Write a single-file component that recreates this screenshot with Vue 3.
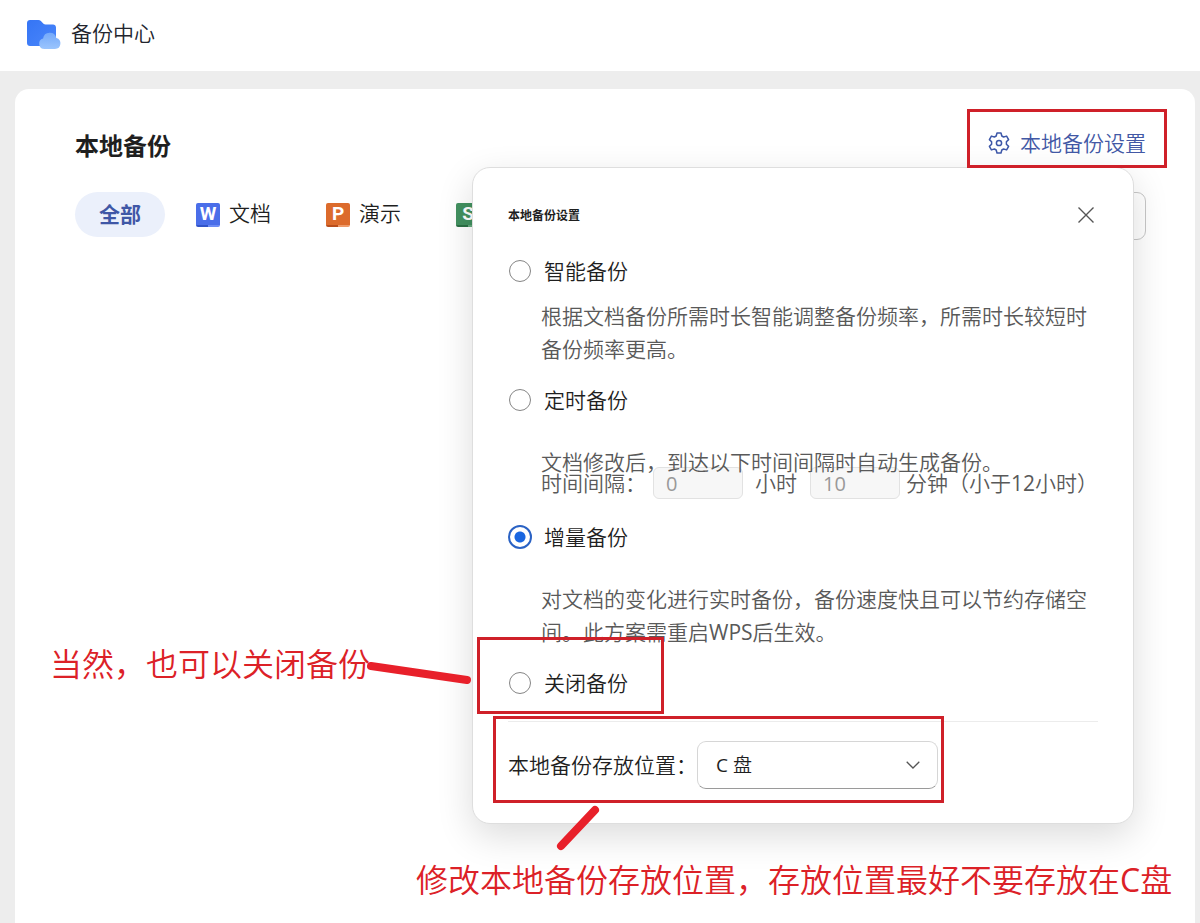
<template>
  <div class="page">
    <header class="topbar">
      <svg class="logo" viewBox="0 0 34 30" aria-hidden="true">
        <defs>
          <linearGradient id="folder" x1="0" y1="0" x2="1" y2="1">
            <stop offset="0" stop-color="#3575f5" />
            <stop offset="1" stop-color="#4a86fa" />
          </linearGradient>
          <linearGradient id="cloud" x1="0" y1="0" x2="0" y2="1">
            <stop offset="0" stop-color="#74a9fa" />
            <stop offset="1" stop-color="#9bc5fd" />
          </linearGradient>
        </defs>
        <path
          d="M3 0h8.500c1 0 1.700.4 2.400 1.100l2.600 2.600c.6.6 1.200.8 2 .8H26c1.700 0 3 1.300 3 3V23c0 1.700-1.300 3-3 3H3c-1.700 0-3-1.300-3-3V3c0-1.700 1.300-3 3-3z"
          fill="url(#folder)"
        />
        <path
          d="M17.500 29a5.300 5.300 0 0 1-1.400-10.400 6.700 6.700 0 0 1 13.200-.6A5.600 5.600 0 0 1 28 29z"
          fill="url(#cloud)"
        />
      </svg>
      <span class="topbar-name">备份中心</span>
    </header>

    <main class="card">
      <div class="card-head">
        <h1 class="card-title">本地备份</h1>
        <button type="button" class="settings-btn">
          <svg width="24" height="24" viewBox="0 0 24 24" fill="none" stroke="#3d57a8" stroke-width="1.500" stroke-linejoin="round" aria-hidden="true">
            <path d="M10 2h4l.8 3 1.800 1 3-.9 2 3.500-2.200 2.200v2.400l2.200 2.200-2 3.500-3-.9-1.800 1-.8 3h-4l-.8-3-1.800-1-3 .9-2-3.500 2.200-2.200v-2.400L2.400 8.600l2-3.500 3 .9 1.800-1z" />
            <circle cx="12" cy="12" r="2.600" />
          </svg>
          <span>本地备份设置</span>
          <i class="mark mark-settings"></i>
        </button>
      </div>

      <div class="toolbar">
        <nav class="tabs">
          <button
            v-for="tab in tabs"
            :key="tab.kind"
            type="button"
            class="tab"
            :class="{ 'is-active': tab.kind === activeTab }"
            @click="activeTab = tab.kind"
          >
            <span v-if="tab.letter" class="file-icon" :class="tab.kind">{{ tab.letter }}</span>
            <span v-if="tab.name">{{ tab.name }}</span>
          </button>
        </nav>
        <input class="search" type="text" aria-label="搜索" />
      </div>

      <section class="dialog" role="dialog" aria-labelledby="dialog-title">
        <div class="dialog-head">
          <h2 id="dialog-title" class="dialog-title">本地备份设置</h2>
          <button type="button" class="close-btn" aria-label="关闭">
            <svg width="16" height="16" viewBox="0 0 16 16" stroke="#555" stroke-width="1.400" aria-hidden="true">
              <path d="M.5.5l15 15M15.500.5l-15 15" />
            </svg>
          </button>
        </div>

        <div class="option">
          <label class="option-label">
            <input v-model="mode" type="radio" name="mode" value="smart" />
            <span>智能备份</span>
          </label>
          <p class="desc desc-near">根据文档备份所需时长智能调整备份频率，所需时长较短时备份频率更高。</p>
        </div>

        <div class="option">
          <label class="option-label">
            <input v-model="mode" type="radio" name="mode" value="timed" />
            <span>定时备份</span>
          </label>
          <p class="desc">文档修改后，到达以下时间间隔时自动生成备份。</p>
          <div class="interval">
            <label for="hours">时间间隔：</label>
            <input id="hours" v-model="hours" class="number" type="text" disabled />
            <label for="hours" class="unit">小时</label>
            <input id="minutes" v-model="minutes" class="number" type="text" disabled />
            <label for="minutes">分钟（小于12小时）</label>
          </div>
        </div>

        <div class="option">
          <label class="option-label">
            <input v-model="mode" type="radio" name="mode" value="increment" />
            <span>增量备份</span>
          </label>
          <p class="desc">对文档的变化进行实时备份，备份速度快且可以节约存储空间。此方案需重启WPS后生效。</p>
        </div>

        <div class="option">
          <label class="option-label">
            <input v-model="mode" type="radio" name="mode" value="off" />
            <span>关闭备份</span>
          </label>
          <i class="mark mark-off"></i>
        </div>

        <div class="location">
          <label for="disk">本地备份存放位置：</label>
          <div class="select-wrap">
            <select id="disk" v-model="disk">
              <option value="C">C 盘</option>
            </select>
            <svg class="chevron" width="14" height="8" viewBox="0 0 14 8" fill="none" stroke="#555" stroke-width="1.300" aria-hidden="true">
              <path d="M.7.7L7 7l6.300-6.300" />
            </svg>
          </div>
          <i class="mark mark-location"></i>
        </div>

        <p class="note note-off">当然，也可以关闭备份</p>
        <svg class="stroke stroke-off" width="106" height="24" viewBox="0 0 106 24" aria-hidden="true">
          <path d="M5 5L101 19" />
        </svg>
        <p class="note note-location">修改本地备份存放位置，存放位置最好不要存放在C盘</p>
        <svg class="stroke stroke-location" width="44" height="46" viewBox="0 0 44 46" aria-hidden="true">
          <path d="M39 5L5 41" />
        </svg>
      </section>
    </main>
  </div>
</template>

<script setup>
import { ref } from 'vue'

const tabs = [
  { kind: 'all', name: '全部' },
  { kind: 'word', name: '文档', letter: 'W' },
  { kind: 'slides', name: '演示', letter: 'P' },
  { kind: 'sheet', letter: 'S' },
]

const activeTab = ref('all')
const mode = ref('increment')
const hours = ref('0')
const minutes = ref('10')
const disk = ref('C')
</script>

<style>
body {
  margin: 0;
  background: #ededed;
}
</style>

<style scoped>
.page {
  min-height: 100vh;
  display: flex;
  flex-direction: column;
  font-family: "Open Sans", "Noto Sans CJK SC DemiLight", "Noto Sans CJK SC", sans-serif;
  font-size: 21px;
  line-height: 30px;
  color: #1f1f1f;
  overflow: hidden;
}

.page * { box-sizing: border-box; }

button, input, select {
  font: inherit;
  color: inherit;
  margin: 0;
}

button {
  padding: 0;
  border: 0;
  background: none;
  cursor: pointer;
}

h1, h2, p { margin: 0; }

.topbar {
  height: 71px;
  padding: 0 27px 2px;
  display: flex;
  align-items: center;
  gap: 10px;
  background: #fff;
}

.logo {
  width: 34px;
  height: 30px;
}

.topbar-name {
  padding-bottom: 3px;
  color: #22252e;
}

.card {
  position: relative;
  flex: 1;
  margin: 18px 5px 0 15px;
  padding: 34px 49px 0 60px;
  background: #fff;
  border-radius: 14px 14px 0 0;
}

.card-head {
  height: 44px;
  display: flex;
  align-items: center;
  justify-content: space-between;
}

.card-title {
  padding-bottom: 1px;
  font-family: "Noto Sans CJK SC", sans-serif;
  font-size: 24px;
  font-weight: 700;
}

.settings-btn {
  position: relative;
  z-index: 2;
  height: 32px;
  padding-bottom: 4px;
  display: flex;
  align-items: center;
  gap: 9px;
  color: #4258a5;
}

.toolbar {
  margin-top: 25px;
  display: flex;
  justify-content: space-between;
}

.tabs {
  display: flex;
  gap: 7px;
}

.tab {
  height: 45px;
  padding: 0 24px 3px;
  display: flex;
  align-items: center;
  gap: 9px;
  border-radius: 23px;
}

.tab.is-active {
  background: #ebf0fb;
  color: #3f57a6;
  font-family: "Noto Sans CJK SC", sans-serif;
  font-weight: 700;
}

.file-icon {
  width: 24px;
  height: 24px;
  margin-top: 3px;
  border-radius: 2px;
  font-family: Roboto, sans-serif;
  font-size: 19px;
  font-weight: 700;
  line-height: 22px;
  text-align: center;
  color: #fff;
}

.word   { background: linear-gradient(90deg, #3254c8 50%, #6d8cf5 50%) bottom / 100% 2px no-repeat #4a6ee9; }
.slides { background: linear-gradient(90deg, #b94e1c 50%, #ef9a68 50%) bottom / 100% 2px no-repeat #dc6b2c; }
.sheet  { background: linear-gradient(90deg, #2b7045 50%, #66aa7e 50%) bottom / 100% 2px no-repeat #429160; }

.search {
  width: 240px;
  height: 48px;
  border: 1px solid #c8c8c8;
  border-radius: 9px;
  background: transparent;
}

.dialog {
  position: absolute;
  top: 78px;
  right: 61px;
  width: 662px;
  padding: 30px 35px 34px;
  background: #fff;
  border: 1px solid #dedede;
  border-radius: 18px;
  box-shadow: 0 12px 36px rgba(0,0,0,0.14);
}

.dialog-head {
  height: 33px;
  margin-bottom: 24px;
  display: flex;
  align-items: center;
  justify-content: space-between;
}

.dialog-title {
  font-family: "Noto Sans CJK SC", sans-serif;
  font-size: 12px;
  font-weight: 700;
}

.close-btn {
  width: 24px;
  height: 24px;
  display: flex;
  align-items: center;
  justify-content: center;
}

.option {
  position: relative;
  margin-bottom: 18px;
}

.option-label {
  height: 32px;
  display: flex;
  align-items: center;
  gap: 12px;
}

.option-label span { padding-bottom: 1px; }

.option-label input {
  appearance: none;
  width: 22px;
  height: 22px;
  margin: 0 1px;
  border: 1px solid #858585;
  border-radius: 50%;
}

.option-label input:checked {
  width: 24px;
  height: 24px;
  margin: 0;
  border: 2px solid #2a62c4;
  background: radial-gradient(circle, #1a66e0 5px, transparent 6px);
}

.desc {
  position: relative;
  z-index: 1;
  margin-top: 30px;
  padding-left: 33px;
  line-height: 33px;
  color: #595959;
}

.desc-near { margin-top: 13px; }

.interval {
  height: 32px;
  margin: -12px 0 22px;
  padding-left: 33px;
  display: flex;
  align-items: center;
  white-space: nowrap;
  color: #595959;
}

.number {
  width: 90px;
  height: 32px;
  margin-right: 6px;
  margin-left: 7px;
  padding: 0 12px;
  border: 1px solid #e2e2e2;
  border-radius: 6px;
  background: #f7f7f7;
  font-size: 20px;
  color: #999;
}

.unit { margin: 0 6px; }

.location {
  position: relative;
  margin-top: 22px;
  padding-top: 19px;
  display: flex;
  align-items: center;
  border-top: 1px solid #ececec;
}

.select-wrap {
  position: relative;
  width: 241px;
}

select {
  appearance: none;
  width: 100%;
  height: 48px;
  padding: 0 18px;
  border: 1px solid #d6d6d6;
  border-bottom-color: #9a9a9a;
  border-radius: 9px;
  background: #fff;
  font-size: 19px;
}

.chevron {
  position: absolute;
  top: 20px;
  right: 18px;
  pointer-events: none;
}

/* red callouts */
.mark {
  position: absolute;
  z-index: 3;
  border: 3px solid #cf2029;
  pointer-events: none;
}

.mark-settings { inset: -20px -21px -7px -20px; }
.mark-off { inset: -30px 434px -15px -31px; }
.mark-location { inset: -6px 154px -14px -15px; }

.note {
  position: absolute;
  font-size: 32px;
  line-height: 40px;
  white-space: nowrap;
  color: #dc2127;
}

.note-off {
  top: 476px;
  left: -423px;
}

.note-location {
  top: 692px;
  left: -57px;
}

.stroke {
  position: absolute;
  fill: none;
  stroke: #e8202a;
  stroke-width: 8px;
  stroke-linecap: round;
}

.stroke-off {
  top: 493px;
  left: -107px;
}

.stroke-location {
  top: 637px;
  left: 83px;
}
</style>
